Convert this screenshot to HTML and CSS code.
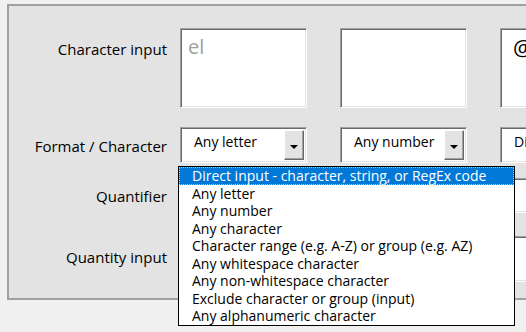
FILE: index.html
```html
<!DOCTYPE html>
<html>
<head>
<meta charset="utf-8">
<link rel="stylesheet" href="styles.css">
</head>
<body>
<div class="frame">
  <div class="grid">
    <div class="label">Character input</div>
    <div class="cell"><div class="box ta"><span class="ph">el</span></div></div>
    <div class="cell"><div class="box ta"></div></div>
    <div class="cell"><div class="box ta"><span class="at">@</span></div></div>

    <div class="label l2">Format / Character</div>
    <div class="cell pop-anchor">
      <div class="box sel"><span class="val">Any letter</span><span class="btn"><span class="arrow"></span></span></div>
      <ul class="list">
        <li class="on">Direct input - character, string, or RegEx code</li>
        <li>Any letter</li>
        <li>Any number</li>
        <li>Any character</li>
        <li>Character range (e.g. A-Z) or group (e.g. AZ)</li>
        <li>Any whitespace character</li>
        <li>Any non-whitespace character</li>
        <li>Exclude character or group (input)</li>
        <li>Any alphanumeric character</li>
      </ul>
    </div>
    <div class="cell"><div class="box sel"><span class="val">Any number</span><span class="btn"><span class="arrow"></span></span></div></div>
    <div class="cell"><div class="box sel"><span class="val">Di</span><span class="btn"><span class="arrow"></span></span></div></div>

    <div class="label l3">Quantifier</div>
    <div class="cell"><div class="box qsel"></div></div>
    <div class="cell"><div class="box qsel"></div></div>
    <div class="cell"><div class="box qsel"><span class="qv">1</span></div></div>

    <div class="label">Quantity input</div>
    <div class="cell"><div class="box qin"></div></div>
    <div class="cell"><div class="box qin"></div></div>
    <div class="cell"><div class="box qin"><span class="qg">1</span></div></div>
  </div>
</div>
</body>
</html>
```

FILE: styles.css
```css
html, body {
  margin: 0;
  padding: 0;
  background: #f0f0f0;
  overflow: hidden;
  width: 526px;
  height: 332px;
}
body {
  font-family: "Open Sans", "Noto Sans", sans-serif;
  color: #000;
}
.frame {
  margin: 4px 0 0 7px;
  width: 600px;
  height: 296px;
  box-sizing: border-box;
  border: 2px solid #a0a0a0;
  border-right: none;
  background: #e3e3e3;
  padding-top: 22px;
}
.grid {
  display: grid;
  grid-template-columns: 171px 160px 160px 160px;
  grid-template-rows: 99px 51px 58px 46px;
}
.label {
  font-size: 15px;
  line-height: 20px;
  text-align: right;
  padding-right: 13px;
  padding-top: 11px;
  white-space: nowrap;
}
.label.l2 {
  padding-top: 9px;
}
.label.l3 {
  padding-top: 8px;
}
.cell {
  position: relative;
}
.box {
  box-sizing: border-box;
  width: 127px;
  background: #fff;
  border: 1px solid;
  border-color: #a0a0a0 #fff #fff #a0a0a0;
  box-shadow: inset 1px 1px 0 #696969, inset -1px -1px 0 #e3e3e3;
}
.ta {
  height: 80px;
  padding: 6px 0 0 7px;
}
.ph {
  font-size: 20px;
  line-height: 24px;
  color: #a0a0a0;
}
.at {
  font-size: 22px;
  line-height: 24px;
  padding-left: 5px;
}
.sel {
  height: 36px;
  display: flex;
  align-items: stretch;
}
.val {
  flex: 1;
  font-size: 14px;
  line-height: 18px;
  padding: 5px 0 0 13px;
  white-space: nowrap;
  overflow: hidden;
}
.btn {
  width: 20px;
  margin: 2px 2px 2px 0;
  box-sizing: border-box;
  background: #e3e3e3;
  border: 1px solid;
  border-color: #fff #696969 #696969 #fff;
  box-shadow: inset -1px -1px 0 #a0a0a0;
  display: flex;
  align-items: center;
  justify-content: center;
}
.arrow {
  width: 0;
  height: 0;
  border-left: 4px solid transparent;
  border-right: 4px solid transparent;
  border-top: 4px solid #000;
  margin-top: 3px;
}
.qsel {
  height: 35px;
  padding: 4px 0 0 2px;
}
.qv {
  font-size: 14px;
  line-height: 18px;
}
.qin {
  height: 46px;
  padding: 10px 0 0 2px;
}
.qg {
  font-size: 20px;
  line-height: 24px;
  color: #a0a0a0;
}
.list {
  position: absolute;
  left: -2px;
  top: 39px;
  z-index: 5;
  margin: 0;
  padding: 0;
  list-style: none;
  width: 337px;
  box-sizing: border-box;
  border: 1px solid #000;
  background: #fff;
}
.list li {
  height: 17.5px;
  line-height: 17.5px;
  font-size: 14px;
  padding-left: 13px;
  white-space: nowrap;
  box-sizing: border-box;
}
.list li.on {
  background: #0078d7;
  color: #fff;
  outline: 1px dotted #f3c56a;
  outline-offset: -1px;
}
```
